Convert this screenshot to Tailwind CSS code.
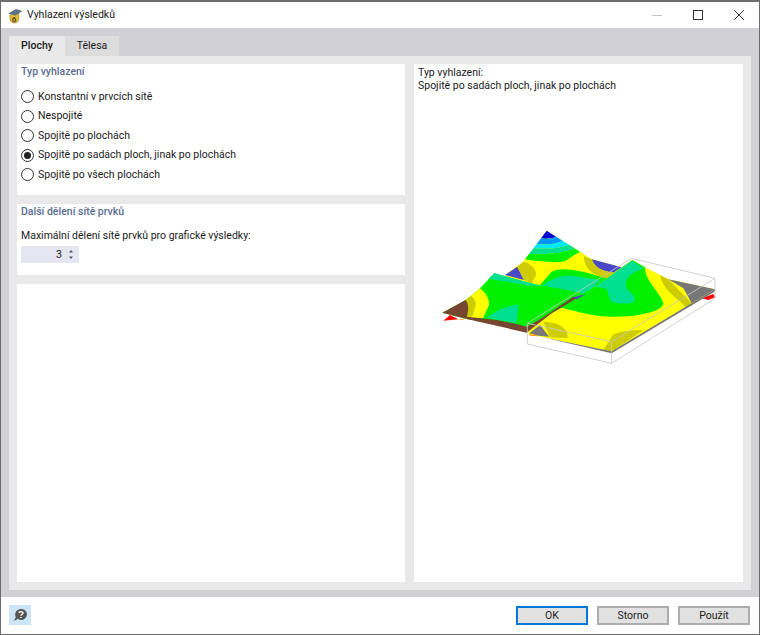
<!DOCTYPE html>
<html lang="en">
<head>
    <meta charset="UTF-8">
    <title>Vyhlazení výsledků</title>
    <script src="https://cdn.jsdelivr.net/npm/@tailwindcss/browser@4"></script>
</head>
<body class="w-[760px] h-[635px] overflow-hidden bg-white text-[10.5px] text-[#1a1a1a] font-['Roboto',sans-serif]">
<div class="w-[760px] h-[635px] flex flex-col border border-[#6d6d6d] border-t-2">

    <!-- Title bar -->
    <div class="h-[26px] shrink-0 flex items-center bg-white">
        <svg class="ml-[6px] w-[16px] h-[17px]" viewBox="0 0 16 17">
            <path d="M3.5 7 C2 11 3 16 7.5 16 C12 16 12.5 11 11.5 6 L8 7 Z" fill="#e8bc2c" stroke="#8a7426" stroke-width="0.6"/>
            <path d="M1 6.5 L9 2 L15.5 4 L8.5 8.5 Z" fill="#5d7186"/>
            <text x="4.8" y="14.5" font-size="8" font-weight="700" fill="#4a4a30">6</text>
        </svg>
        <span class="ml-[4px] text-[10.5px]">Vyhlazení výsledků</span>
        <div class="ml-auto flex items-center">
            <svg class="w-[10px] h-[10px] mr-[31px]" viewBox="0 0 10 10"><path d="M0 5.5H10" stroke="#c4c4c4" stroke-width="1"/></svg>
            <svg class="w-[10px] h-[10px] mr-[31px]" viewBox="0 0 10 10"><rect x="0.5" y="0.5" width="9" height="9" fill="none" stroke="#333" stroke-width="1"/></svg>
            <svg class="w-[10px] h-[10px] mr-[15px]" viewBox="0 0 10 10"><path d="M0.2 0.2L9.8 9.8M9.8 0.2L0.2 9.8" stroke="#333" stroke-width="1"/></svg>
        </div>
    </div>

    <!-- Main area -->
    <div class="h-[569px] shrink-0 bg-[#d0d0d5] px-[8px] pt-[8px] pb-[7px] flex flex-col">
        <div class="flex h-[20px] shrink-0">
            <div class="w-[56px] bg-[#e9e9e9] flex items-center justify-center font-medium">Plochy</div>
            <div class="w-[54px] bg-[#dcdcdc] flex items-center justify-center">Tělesa</div>
        </div>
        <div class="w-[742px] h-[534px] bg-[#e9e9e9] p-[8px] flex gap-[9px]">
            <!-- Left column -->
            <div class="w-[388px] flex flex-col gap-[9px]">
                <div class="h-[131px] bg-white px-[4px]">
                    <div class="h-[15px] leading-[15px] font-medium text-[#5b6d8f]">Typ vyhlazení</div>
                    <div class="mt-[8px] flex flex-col">
                        <label class="h-[19.5px] flex items-center gap-[4px]"><span class="w-[13px] h-[13px] rounded-full border border-[#333] bg-white"></span>Konstantní v prvcích sítě</label>
                        <label class="h-[19.5px] flex items-center gap-[4px]"><span class="w-[13px] h-[13px] rounded-full border border-[#333] bg-white"></span>Nespojité</label>
                        <label class="h-[19.5px] flex items-center gap-[4px]"><span class="w-[13px] h-[13px] rounded-full border border-[#333] bg-white"></span>Spojitě po plochách</label>
                        <label class="h-[19.5px] flex items-center gap-[4px]"><span class="w-[13px] h-[13px] rounded-full border border-[#333] bg-white flex items-center justify-center"><span class="w-[7px] h-[7px] rounded-full bg-[#222]"></span></span>Spojitě po sadách ploch, jinak po plochách</label>
                        <label class="h-[19.5px] flex items-center gap-[4px]"><span class="w-[13px] h-[13px] rounded-full border border-[#333] bg-white"></span>Spojitě po všech plochách</label>
                    </div>
                </div>
                <div class="h-[71px] bg-white px-[4px]">
                    <div class="h-[15px] leading-[15px] font-medium text-[#5b6d8f]">Další dělení sítě prvků</div>
                    <div class="mt-[9px] h-[16px] leading-[16px]">Maximální dělení sítě prvků pro grafické výsledky:</div>
                    <div class="mt-[2px] w-[58px] h-[17px] bg-[#e6e6f2] flex items-center justify-end">
                        <span>3</span>
                        <svg class="ml-[6px] mr-[5px] w-[6px] h-[11px]" viewBox="0 0 6 11"><path d="M3 1L5 3.5H1Z M3 10L5 7.5H1Z" fill="#555"/></svg>
                    </div>
                </div>
                <div class="flex-1 bg-white"></div>
            </div>
            <!-- Right column -->
            <div class="w-[329px] bg-white pl-[4px] pt-[2px]">
                <div class="leading-[13px]">Typ vyhlazení:</div>
                <div class="leading-[13px]">Spojitě po sadách ploch, jinak po plochách</div>
                <svg class="ml-[12px] mt-[128px] w-[300px] h-[150px]" viewBox="0 0 900 450">
                    <!-- back plate -->
                    <polygon points="350,32 450,95 485,118 575,142 530,178 400,240 300,220 225,165 280,125" fill="#ffff00"/>
                    <path d="M350,32 L378,50 C365,56 345,57 333,55 Z" fill="#0000d8"/>
                    <path d="M333,55 C345,57 365,56 378,50 L398,62 C375,73 345,75 320,72 Z" fill="#0098ff"/>
                    <path d="M320,72 C345,75 375,73 398,62 L417,74 C390,86 340,88 311,84 Z" fill="#00e8ff"/>
                    <path d="M311,84 C340,88 390,86 417,74 L436,86 C400,100 340,104 297,102 Z" fill="#00e090"/>
                    <path d="M297,102 C340,104 400,100 436,86 L451,96 C420,108 415,125 390,126 C360,128 310,122 285,118 Z" fill="#00f000"/>
                    <path d="M225,165 L262,140 L282,180 Z" fill="#4848c8"/>
                    <path d="M262,140 L280,125 C305,130 320,150 318,165 L305,190 L282,180 Z" fill="#cccc00"/>
                    <path d="M485,118 L575,142 L550,158 C520,155 495,145 485,118 Z" fill="#4848c8"/>
                    <path d="M462,108 L485,118 C495,145 520,155 550,158 L530,176 C500,170 460,150 462,108 Z" fill="#cccc00"/>
                    <path d="M330,195 L365,155 C400,140 450,150 530,176 L490,205 L400,225 Z" fill="#00f000"/>
                    <path d="M338,197 C365,175 400,165 425,167 L512,180 L470,222 Z" fill="#00e090"/>

                    <!-- right plate -->
                    <polygon points="607,120 645,142 715,178 855,208 545,395 295,342 300,320 495,200" fill="#ffff00"/>
                    <path d="M607,120 L645,142 C645,185 690,215 700,250 C700,270 640,290 560,290 C500,292 460,280 390,262 L495,200 Z" fill="#00f000"/>
                    <path d="M607,122 L640,145 C600,160 580,180 590,205 C600,220 620,225 612,245 C600,252 555,255 540,240 C535,225 535,210 525,205 L495,200 Z" fill="#00e090"/>
                    <path d="M690,165 L715,178 L785,250 L770,264 C745,235 700,215 690,165 Z" fill="#cccc00"/>
                    <polygon points="715,178 855,208 785,250 760,205" fill="#787878"/>
                    <polygon points="815,235 850,222 855,232 835,240" fill="#ff0000"/>
                    <path d="M340,305 C380,305 420,325 412,355 L360,352 Z" fill="#cccc00"/>
                    <polygon points="298,340 330,315 358,350 325,347" fill="#787878"/>
                    <path d="M545,395 L520,390 L550,343 C570,333 610,330 640,330 Z" fill="#cccc00"/>
                    <polygon points="330,350 545,394 855,208 856,214 545,400" fill="#787878"/>

                    <!-- front-left plate -->
                    <polygon points="193,160 315,193 340,197 470,222 290,320 110,297 37,278 107,240 150,205" fill="#00f000"/>
                    <polygon points="193,160 315,193 340,197 300,197 175,176" fill="#00e090"/>
                    <path d="M107,240 L150,205 C175,225 185,250 170,270 L160,293 L113,298 Z" fill="#ffff00"/>
                    <path d="M107,240 L123,227 C150,250 130,265 130,285 L113,298 Z" fill="#cccc00"/>
                    <path d="M37,278 L107,240 C122,260 110,285 110,297 Z" fill="#774630"/>
                    <path d="M170,293 C190,280 225,255 265,255 L260,310 Z" fill="#00e090"/>
                    <polygon points="110,290 200,300 260,312 290,320 335,295 430,230 440,235 365,280 290,338 110,297" fill="#774630"/>
                    <polygon points="40,302 60,285 85,298" fill="#ff0000"/>
                    <polygon points="85,297 105,296 95,300" fill="#ffa000"/>
                    <polygon points="295,342 320,345 325,349 300,347" fill="#ffa000"/>
                    <polygon points="430,232 468,222 440,238" fill="#4848c8"/>

                    <!-- bounding box -->
                    <g fill="none" stroke="#c8c8c8" stroke-width="2.5">
                        <path d="M292,310 L605,115 L855,175 L545,365 Z"/>
                        <path d="M292,372 L545,430 L855,235"/>
                        <path d="M292,310 V372 M545,365 V430 M855,175 V235"/>
                    </g>
                </svg>
            </div>
        </div>
    </div>

    <!-- Footer -->
    <div class="flex-1 bg-white flex items-start pt-[8px] pr-[9px] pl-[8px]">
        <div class="w-[22px] h-[20px] bg-[#cce4f7] flex items-center justify-center">
            <svg class="w-[14px] h-[14px]" viewBox="0 0 14 14">
                <path d="M8 1 A5.5 5.5 0 1 1 5 10.8 L1 13 L2.8 9 A5.5 5.5 0 0 1 8 1 Z" fill="#555"/>
                <path d="M6 5 C6 3.2 10 3.2 10 5 C10 6.3 8 6.3 8 7.8 M8 9 V10" fill="none" stroke="#fff" stroke-width="1.4"/>
            </svg>
        </div>
        <div class="ml-auto mt-[1px] flex gap-[9px]">
            <button class="w-[72px] h-[19px] bg-[#e1e1e1] border-2 border-[#0078d7] flex items-center justify-center">OK</button>
            <button class="w-[72px] h-[19px] bg-[#e1e1e1] border-2 border-[#adadad] flex items-center justify-center">Storno</button>
            <button class="w-[72px] h-[19px] bg-[#e1e1e1] border-2 border-[#adadad] flex items-center justify-center">Použít</button>
        </div>
    </div>
</div>
</body>
</html>
